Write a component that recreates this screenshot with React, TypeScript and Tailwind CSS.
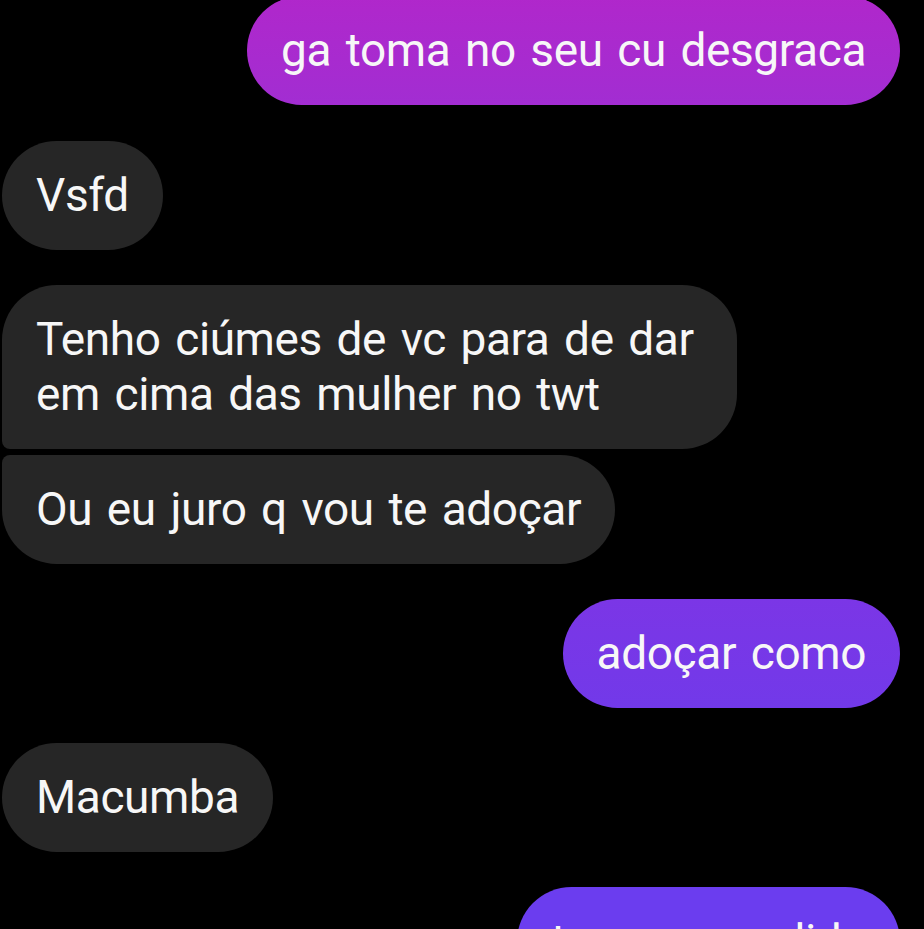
type Msg = {
  id: number
  text: string
  mine: boolean
  shape: string
  color?: string
}

// chat thread, top to bottom
const messages: Msg[] = [
  { id: 1, text: 'ga toma no seu cu desgraca', mine: true, shape: 'rounded-[55px] -mt-[4px]', color: 'bg-gradient-to-b from-[#b027cb] to-[#a22dd2]' },
  { id: 2, text: 'Vsfd', mine: false, shape: 'rounded-[55px] mt-[36px]' },
  { id: 3, text: 'Tenho ciúmes de vc para de dar em cima das mulher no twt', mine: false, shape: 'rounded-[55px] rounded-bl-[8px] mt-[35px]' },
  { id: 4, text: 'Ou eu juro q vou te adoçar', mine: false, shape: 'rounded-[55px] rounded-tl-[8px] mt-[6px]' },
  { id: 5, text: 'adoçar como', mine: true, shape: 'rounded-[55px] mt-[35px]', color: 'bg-gradient-to-b from-[#7b36e6] to-[#7239e9]' },
  { id: 6, text: 'Macumba', mine: false, shape: 'rounded-[55px] mt-[35px]' },
  { id: 7, text: 'tu e uma valida', mine: true, shape: 'rounded-[55px] mt-[35px]', color: 'bg-[#6b3def]' },
]

export default function App() {
  return (
    <div
      className="w-[924px] h-[929px] overflow-hidden bg-black text-[#f7f7f7]"
      style={{ fontFamily: 'Roboto, "Noto Sans", sans-serif' }}
    >
      <div className="flex flex-col pl-[2px] pr-[24px]">
        {messages.map((m) => (
          <div
            key={m.id}
            className={`${m.mine ? 'self-end' : 'self-start bg-[#262626]'} ${m.color ?? ''} ${m.shape} max-w-[735px] px-[34px] py-[27px] text-[46px] leading-[55px] tracking-[-0.4px] [word-spacing:3.6px]`}
          >
            {m.text}
          </div>
        ))}
      </div>
    </div>
  )
}
